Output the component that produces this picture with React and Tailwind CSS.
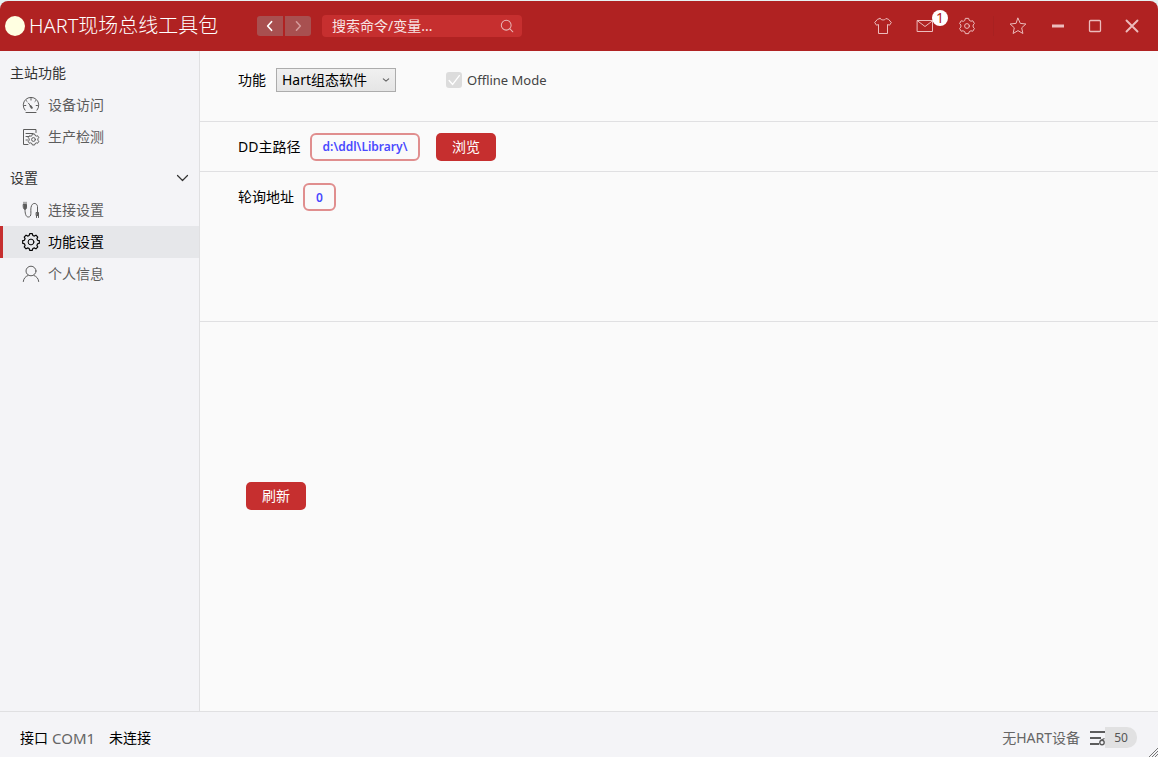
import { useState } from 'react'
import clsx from 'clsx'

function Icon({ size = 18, className, children }) {
  return (
    <svg
      width={size}
      height={size}
      viewBox="0 0 18 18"
      fill="none"
      stroke="currentColor"
      strokeLinecap="round"
      strokeLinejoin="round"
      className={clsx('shrink-0', className)}
      aria-hidden="true"
    >
      {children}
    </svg>
  )
}

// outline of a cog: each tooth is a flat top between two shoulders
function gearPath(cx, cy, teeth, outer, inner) {
  const step = (Math.PI * 2) / teeth
  const points = []
  for (let i = 0; i < teeth; i++) {
    const mid = i * step - Math.PI / 2
    const corners = [
      [-0.34, inner],
      [-0.2, outer],
      [0.2, outer],
      [0.34, inner],
    ]
    corners.forEach(([offset, r]) => {
      const angle = mid + offset * step
      points.push(`${(cx + Math.cos(angle) * r).toFixed(2)} ${(cy + Math.sin(angle) * r).toFixed(2)}`)
    })
  }
  return `M${points.join('L')}z`
}

function GaugeIcon() {
  return (
    <Icon>
      <path d="M3 14.200a7.800 7.800 0 1 1 12 0M4 16.500h10" />
      <path d="M9 2.500v1.600M4.300 4.700l.8.8M13.700 4.700l-.8.8M2.500 9.500h1.300M14.200 9.500h1.300" />
      <path d="m6.500 7.200 3.300 4.600" />
      <path d="m8.500 10 1.300 1.800" strokeWidth="2" />
    </Icon>
  )
}

function InspectIcon() {
  return (
    <Icon>
      <path d="M6 16.500H1.500v-15h12.500v3M4 5.500h7M4 8.500h3M4 12h1.500" />
      <path d={gearPath(11.5, 11.5, 6, 5.6, 4.4)} />
      <circle cx="11.500" cy="11.500" r="1.900" />
    </Icon>
  )
}

function CableIcon() {
  return (
    <Icon>
      <path d="M3 8.500c0 3 .5 7.500 3.300 7.500 4 0 2-6 2.700-9.500.8-5.500 6-5 6.500-1V11" />
      <path d="M1.500 3.500h3v3.300l-.7 1.400H2.200l-.7-1.400zM2 1.200v2M4 1.200v2" fill="currentColor" />
      <path d="M14.500 11.500h2v3h-2zM14.500 14.500v2M16.500 14.500v2" fill="currentColor" />
    </Icon>
  )
}

function CogIcon() {
  return (
    <Icon>
      <path d={gearPath(9, 9, 8, 8.4, 6.8)} strokeWidth="1.200" />
      <circle cx="9" cy="9" r="2.900" />
    </Icon>
  )
}

function UserIcon() {
  return (
    <Icon>
      <ellipse cx="9" cy="6" rx="5" ry="4.800" />
      <path d="M1.300 16.500c.3-3 2-5 4.700-6M16.700 16.500c-.3-3-2-5-4.700-6" />
    </Icon>
  )
}

const groups = [
  {
    title: '主站功能',
    items: [
      { name: '设备访问', icon: GaugeIcon },
      { name: '生产检测', icon: InspectIcon },
    ],
  },
  {
    title: '设置',
    collapsible: true,
    items: [
      { name: '连接设置', icon: CableIcon },
      { name: '功能设置', icon: CogIcon },
      { name: '个人信息', icon: UserIcon },
    ],
  },
]

function TitleBar() {
  return (
    <header className="flex h-[50px] shrink-0 items-center rounded-t-lg bg-[#b02222] pl-[5px] pr-[17px] text-white">
      <span className="size-5 rounded-full bg-[#ffffe1]" />
      <h1 className="ml-1 w-[228px] whitespace-nowrap text-xl leading-6 font-light">HART现场总线工具包</h1>

      <nav className="flex gap-0.5" aria-label="历史">
        <button type="button" aria-label="后退" className="flex h-5 w-[26px] items-center justify-center rounded-l-[3px] bg-[#a85050]">
          <Icon size={14}><path d="M11 3.500 6 9l5 5.500" strokeWidth="2.200" /></Icon>
        </button>
        <button type="button" aria-label="前进" className="flex h-5 w-[26px] items-center justify-center rounded-r-[3px] bg-[#a85050] text-[#d49a9a]">
          <Icon size={14}><path d="m7 3.500 5 5.500-5 5.500" strokeWidth="2" /></Icon>
        </button>
      </nav>

      <div className="ml-[11px] flex h-[22px] w-[200px] items-center rounded bg-[#c62f2f] pl-2.5 pr-2">
        <input
          type="text"
          aria-label="搜索"
          placeholder="搜索命令/变量..."
          className="min-w-0 flex-1 bg-transparent text-sm leading-5 outline-none placeholder:text-[#f7e4e4]"
        />
        <button type="button" aria-label="开始搜索" className="text-[#e8b5b5]">
          <Icon size={14}>
            <circle cx="8" cy="8" r="6.300" strokeWidth="1.300" />
            <path d="m12.800 12.800 3.700 3.700" strokeWidth="1.300" />
          </Icon>
        </button>
      </div>

      <div className="ml-auto flex items-center text-[#ecbcbc]">
        <button type="button" aria-label="皮肤">
          <Icon>
            <path d="M6 1.500 3.500 2.300.7 5.500l1.800 2.700 2-.7v9h9v-9l2 .7 1.800-2.700-2.800-3.200L12 1.500c-1 2-5 2-6 0z" />
          </Icon>
        </button>
        <button type="button" aria-label="消息" className="relative ml-6">
          <Icon>
            <path d="M1.500 3.500h15v11h-15zM1.500 3.800 9 9.500l7.500-5.700" />
          </Icon>
          <span className="absolute -top-[7px] left-4 flex size-4 items-center justify-center rounded-full bg-white text-sm leading-4 text-[#b02222]">
            1
          </span>
        </button>
        <button type="button" aria-label="设置" className="ml-6">
          <Icon>
            <path d={gearPath(9, 9, 6, 7.8, 6.2)} />
            <circle cx="9" cy="9" r="2.400" />
          </Icon>
        </button>
        <span className="ml-[17px] h-5 w-px bg-[#a82121]" />
        <button type="button" aria-label="收藏" className="ml-[15px]">
          <Icon>
            <path d="m9 1.200 2.300 5.200 5.600.6-4.200 3.800 1.200 5.700L9 13.600l-4.900 2.900 1.200-5.700L1.100 7l5.600-.6z" />
          </Icon>
        </button>
        <button type="button" aria-label="最小化" className="ml-[22px]">
          <Icon><path d="M3 9h12" strokeWidth="3" strokeLinecap="butt" /></Icon>
        </button>
        <button type="button" aria-label="最大化" className="ml-[19px]">
          <Icon><rect x="3.500" y="3.500" width="11" height="11" rx="1" strokeWidth="1.300" /></Icon>
        </button>
        <button type="button" aria-label="关闭" className="ml-[19px]">
          <Icon><path d="m3.500 3.500 11 11m0-11-11 11" strokeWidth="1.900" /></Icon>
        </button>
      </div>
    </header>
  )
}

function Sidebar({ active, onSelect }) {
  return (
    <aside className="flex w-[200px] shrink-0 flex-col gap-[9px] border-r border-[#e0e0e2] bg-[#f4f4f7] pt-1.5">
      {groups.map((group) => (
        <section key={group.title}>
          <h2 className="flex h-8 items-center justify-between pl-2.5 pr-2 text-sm leading-5 text-[#333]">
            {group.title}
            {group.collapsible && (
              <button type="button" aria-label="折叠">
                <Icon><path d="m4.500 6.500 5 5 5-5" strokeWidth="1.200" /></Icon>
              </button>
            )}
          </h2>
          <ul>
            {group.items.map(({ name, icon: ItemIcon }) => (
              <li key={name}>
                <button
                  type="button"
                  onClick={() => onSelect(name)}
                  className={clsx(
                    'flex h-8 w-full items-center gap-2 border-l-3 pl-[19px] text-sm leading-5',
                    active === name
                      ? 'border-[#c62f2f] bg-[#e6e7ea] text-black'
                      : 'border-transparent text-[#5c5c5c]'
                  )}
                >
                  <ItemIcon />
                  {name}
                </button>
              </li>
            ))}
          </ul>
        </section>
      ))}
    </aside>
  )
}

function RedButton({ children }) {
  return (
    <button type="button" className="h-7 w-[60px] rounded-[5px] bg-[#c62f2f] text-sm leading-5 text-white">
      {children}
    </button>
  )
}

function SettingsPanel() {
  const [path, setPath] = useState('d:\\ddl\\Library\\')
  const [address, setAddress] = useState('0')
  const field =
    'h-7 rounded-md border-2 border-[#e08e8e] bg-[#fafafa] text-center text-xs font-semibold text-[#4a4aff] outline-none'

  return (
    <main className="flex min-w-0 flex-1 flex-col bg-[#fafafa] text-sm leading-5 text-black">
      <div className="flex h-[71px] items-start border-b border-[#e0e0e2] pl-[38px] pt-[17px]">
        <label htmlFor="feature" className="mt-0.5 w-[38px]">功能</label>
        <div className="relative">
          <select
            id="feature"
            className="h-6 w-[120px] appearance-none border border-[#acacac] bg-linear-to-b from-[#f0f0f0] to-[#e5e5e5] pl-[5px] text-sm leading-5"
          >
            <option>Hart组态软件</option>
          </select>
          <Icon size={8} className="pointer-events-none absolute right-1.5 top-2 text-[#606060]">
            <path d="m3 6.500 6 5 6-5" strokeWidth="2.500" />
          </Icon>
        </div>
        <label className="ml-[50px] mt-0.5 flex items-center gap-[5px] text-[13px] text-[#444]">
          <span className="relative flex">
            <input type="checkbox" defaultChecked disabled className="size-4 appearance-none rounded-[3px] bg-[#dcdcdc]" />
            <Icon size={16} className="pointer-events-none absolute left-0 top-0 text-white">
              <path d="m3.500 9.500 4 4.500 7.500-10" strokeWidth="1.500" />
            </Icon>
          </span>
          Offline Mode
        </label>
      </div>

      <div className="flex h-[50px] items-center border-b border-[#e0e0e2] pl-[38px]">
        <label htmlFor="dd-path" className="w-[72px]">DD主路径</label>
        <input
          id="dd-path"
          value={path}
          onChange={(e) => setPath(e.target.value)}
          className={clsx(field, 'mr-4 w-[110px]')}
        />
        <RedButton>浏览</RedButton>
      </div>

      <div className="flex h-[150px] items-start border-b border-[#e0e0e2] pl-[38px] pt-[11px]">
        <label htmlFor="poll-address" className="mt-1 w-[65px]">轮询地址</label>
        <input
          id="poll-address"
          value={address}
          onChange={(e) => setAddress(e.target.value)}
          className={clsx(field, 'w-[33px]')}
        />
      </div>

      <div className="flex-1 pl-[46px] pt-40">
        <RedButton>刷新</RedButton>
      </div>
    </main>
  )
}

function StatusBar() {
  return (
    <footer className="relative flex h-[46px] shrink-0 items-center border-t border-[#e0e0e2] bg-[#f4f4f7] pl-5 pr-[21px] pt-1.5 text-sm leading-5">
      <span className="text-black">接口</span>
      <span className="ml-1 text-[15px] text-[#666]">COM1</span>
      <span className="ml-[14px] text-black">未连接</span>

      <span className="ml-auto text-[#666]">无HART设备</span>
      <div className="ml-2.5 flex items-center">
        <svg width="15" height="16" viewBox="0 0 15 16" fill="none" stroke="#5c5c5c" strokeWidth="2" aria-hidden="true">
          <path d="M0 2h15M0 8h11M0 14h9" />
          <path d="M10.500 10.500 14.500 8.500" strokeWidth="1.300" />
          <circle cx="12" cy="12.500" r="2.200" strokeWidth="1.400" />
        </svg>
        <span className="flex h-[21px] w-8 items-center justify-center rounded-r-[10px] bg-[#e1e1e2] text-xs text-[#555]">50</span>
      </div>

      <svg className="absolute bottom-0 right-0" width="10" height="9" viewBox="0 0 10 9" stroke="#777" aria-hidden="true">
        <path d="m1 9 9-9M4 9l6-6M7 9l3-3" />
      </svg>
    </footer>
  )
}

export default function App() {
  const [active, setActive] = useState('功能设置')

  return (
    <div className="flex min-h-screen flex-col bg-[#e6f2f2] pt-px font-['Noto_Sans','Noto_Sans_CJK_SC',sans-serif]">
      <TitleBar />
      <div className="flex flex-1">
        <Sidebar active={active} onSelect={setActive} />
        <SettingsPanel />
      </div>
      <StatusBar />
    </div>
  )
}
